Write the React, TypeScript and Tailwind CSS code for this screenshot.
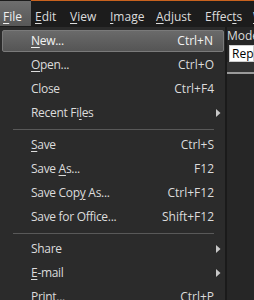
import React from "react";

const U = ({ children }: { children: React.ReactNode }) => (
  <span className="underline underline-offset-2 decoration-1">{children}</span>
);

type Item =
  | { sep: true }
  | { label: React.ReactNode; sc?: string; arrow?: boolean; active?: boolean };

const items: Item[] = [
  { label: <><U>N</U>ew...</>, sc: "Ctrl+N", active: true },
  { label: <><U>O</U>pen...</>, sc: "Ctrl+O" },
  { label: <>Close</>, sc: "Ctrl+F4" },
  { label: <>Recent Fi<U>l</U>es</>, arrow: true },
  { sep: true },
  { label: <><U>S</U>ave</>, sc: "Ctrl+S" },
  { label: <>Save <U>A</U>s...</>, sc: "F12" },
  { label: <>Save Cop<U>y</U> As...</>, sc: "Ctrl+F12" },
  { label: <>Save for Office...</>, sc: "Shift+F12" },
  { sep: true },
  { label: <>Share</>, arrow: true },
  { label: <><U>E</U>-mail</>, arrow: true },
  { label: <>Print...</>, sc: "Ctrl+P" },
];

const Arrow = () => (
  <svg width="5" height="8" viewBox="0 0 5 8" className="block">
    <path d="M0 0 L4.5 4 L0 8 Z" fill="#c8c8c8" />
  </svg>
);

export default function App() {
  const font = { fontFamily: '"Open Sans", "Noto Sans", sans-serif' };
  return (
    <div
      className="w-[254px] h-[300px] overflow-hidden bg-[#2b2b2b] text-[12px] text-[#dcdcdc] flex flex-col"
      style={font}
    >
      {/* menu bar */}
      <div className="h-[27px] bg-[#1c1c1c] flex items-stretch shrink-0 relative overflow-hidden">
        <div className="absolute top-0 left-[31px] right-0 h-px bg-[#c8621e]" />
        <div className="w-[31px] shrink-0 mt-px mb-px flex items-center pt-[6px] pl-[3px] bg-gradient-to-b from-[#6e6e6e] to-[#575757] text-[#f0f0f0]">
          <span><U>F</U>ile</span>
        </div>
        <div className="flex items-center pt-[6px] pl-[4px] whitespace-nowrap">
          <span className="w-[35px] shrink-0"><U>E</U>dit</span>
          <span className="w-[40px] shrink-0"><U>V</U>iew</span>
          <span className="w-[46px] shrink-0"><U>I</U>mage</span>
          <span className="w-[49px] shrink-0"><U>A</U>djust</span>
          <span className="w-[48px] shrink-0">Effec<U>t</U>s</span>
          <span className="shrink-0"><U>W</U>indow</span>
        </div>
      </div>

      <div className="flex flex-1 min-h-0">
        {/* dropdown */}
        <div className="w-[225px] shrink-0 bg-[#2b2b2b] pt-[2px] pl-[2px] pr-[1px] flex flex-col">
          {items.map((it, i) =>
            "sep" in it ? (
              <div key={i} className="h-[8px] flex items-center pl-[11px] pr-[10px] shrink-0">
                <div className="h-px w-full bg-[#595959]" />
              </div>
            ) : it.active ? (
              <div
                key={i}
                className="h-[22px] my-px shrink-0 flex items-center pl-[28px] pr-[10px] whitespace-nowrap rounded-[2px] border border-[#7a7a7a] bg-gradient-to-b from-[#6a6a6a] to-[#555555] text-[#f2f2f2]"
              >
                <span className="flex-1 tracking-[-0.3px]">{it.label}</span>
                {it.sc && <span>{it.sc}</span>}
              </div>
            ) : (
              <div
                key={i}
                className="h-[24px] shrink-0 flex items-center pl-[29px] pr-[10px] whitespace-nowrap"
              >
                <span className="flex-1 tracking-[-0.3px]">{it.label}</span>
                {it.sc && <span>{it.sc}</span>}
                {it.arrow && (
                  <span className="-mr-[7px]">
                    <Arrow />
                  </span>
                )}
              </div>
            )
          )}
        </div>
        <div className="w-[2px] shrink-0 bg-[#1a1a1a]" />
        {/* right panel */}
        <div className="flex-1 min-w-0 bg-[#262626] flex flex-col overflow-hidden">
          <div className="h-[18px] flex items-center whitespace-nowrap">Mode:</div>
          <div className="h-[17px] ml-[2px] bg-white text-black pl-[2px] flex items-center whitespace-nowrap border border-[#cfcfcf]">
            Replace
          </div>
          <div className="h-[10px] bg-[#333333]" />
          <div className="h-[2px] bg-[#9a9a9a]" />
        </div>
      </div>
    </div>
  );
}
